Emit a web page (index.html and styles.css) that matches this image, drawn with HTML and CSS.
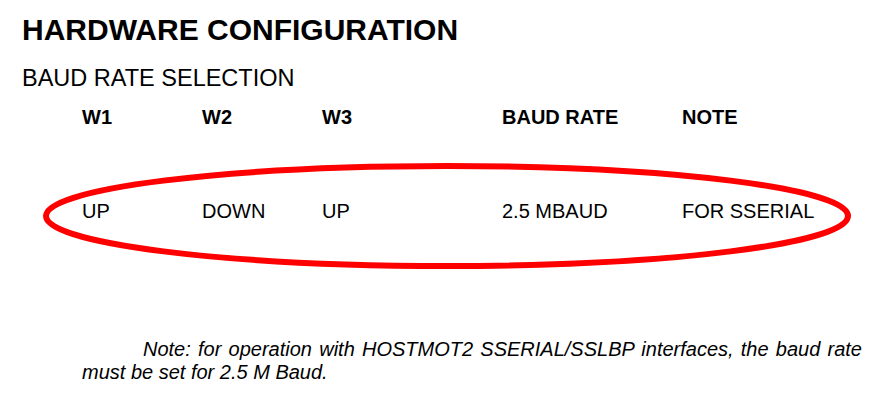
FILE: index.html
```html
<!DOCTYPE html>
<html>
<head>
<meta charset="utf-8">
<link rel="stylesheet" href="styles.css">
</head>
<body>
<div class="page">
  <h1 class="title">HARDWARE CONFIGURATION</h1>
  <h2 class="subtitle">BAUD RATE SELECTION</h2>
  <div class="table">
    <div class="row head">
      <span>W1</span><span>W2</span><span>W3</span><span></span><span>BAUD RATE</span><span>NOTE</span>
    </div>
    <div class="row data">
      <span>UP</span><span>DOWN</span><span>UP</span><span></span><span>2.5 MBAUD</span><span>FOR SSERIAL</span>
      <svg class="circle" width="814" height="112" viewBox="0 0 814 112" aria-hidden="true">
        <ellipse cx="407" cy="56" rx="401" ry="50" fill="none" stroke="#ff0000" stroke-width="6"/>
      </svg>
    </div>
  </div>
  <p class="note">Note: for operation with HOSTMOT2 SSERIAL/SSLBP interfaces, the baud rate must be set for 2.5 M Baud.</p>
</div>
</body>
</html>
```
FILE: styles.css
```css
html, body {
  margin: 0;
  padding: 0;
  background: #fff;
}
.page {
  font-family: "Liberation Sans", Arial, sans-serif;
  color: #000;
  padding: 14px 0 0 22px;
  width: 840px;
}
.title {
  margin: 0;
  font-size: 30px;
  font-weight: bold;
  line-height: 32px;
}
.subtitle {
  margin: 19px 0 0;
  font-size: 23.5px;
  font-weight: normal;
  line-height: 26px;
}
.table {
  margin: 15px 0 0 60px;
}
.row {
  display: grid;
  grid-template-columns: 120px 120px 180px 0px 180px auto;
  font-size: 20px;
  line-height: 22px;
}
.head {
  font-weight: bold;
}
.data {
  position: relative;
  margin-top: 72px;
}
.circle {
  position: absolute;
  left: -42px;
  top: -40px;
}
.note {
  margin: 116px 0 0 60px;
  width: 780px;
  font-size: 20px;
  font-style: italic;
  line-height: 23px;
  text-align: justify;
  text-indent: 61px;
}
```
